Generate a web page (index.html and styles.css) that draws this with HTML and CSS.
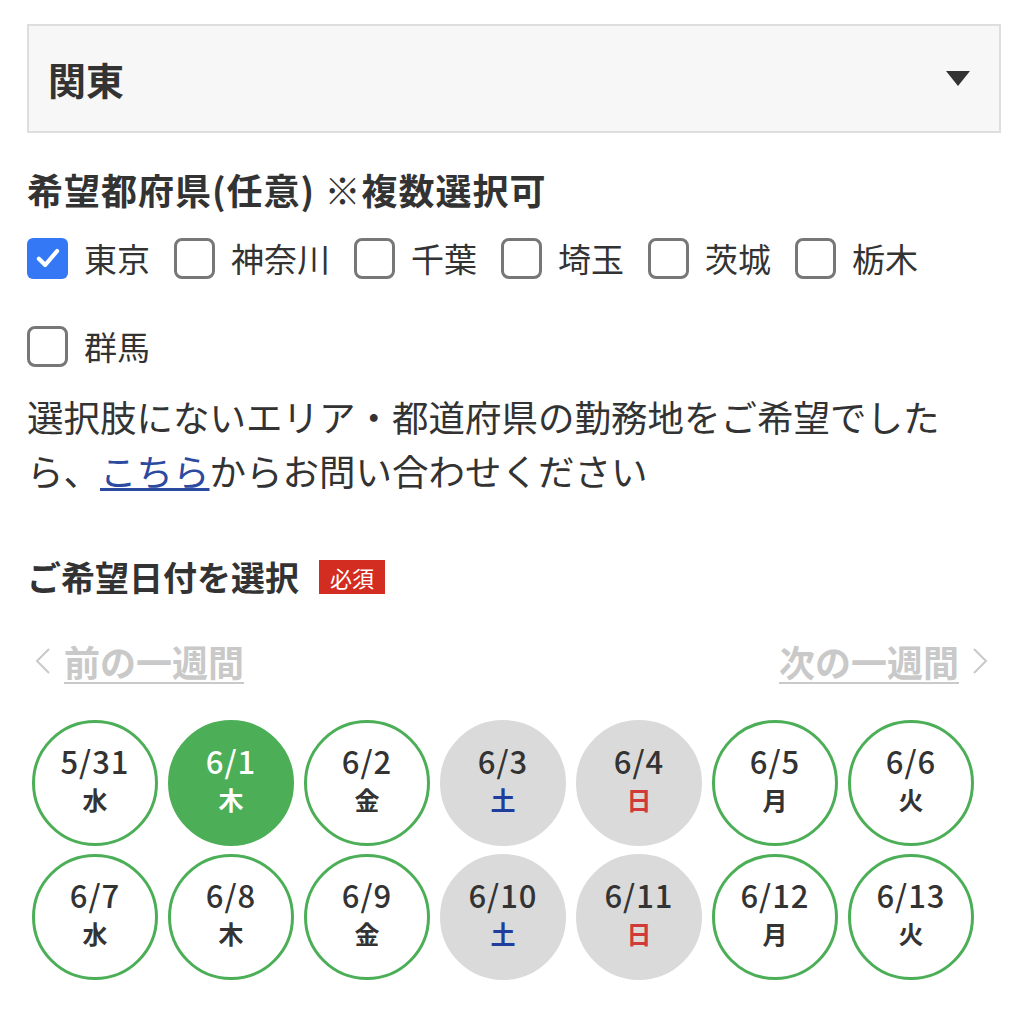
FILE: index.html
```html
<!DOCTYPE html>
<html lang="ja">
  <head>
    <meta charset="UTF-8" />
    <meta name="viewport" content="width=device-width, initial-scale=1.0" />
    <title>希望エリア・日付選択</title>
    <link rel="stylesheet" href="styles.css">
  </head>

  <body>
    <div class="select">
      <span>関東</span>
      <i class="caret"></i>
    </div>

    <h3 class="label pref-label">希望都府県(任意) ※複数選択可</h3>
    <ul class="prefs">
      <li>
        <span class="box checked">
          <svg viewBox="0 0 40 40" width="28" height="28">
            <polyline points="7,21 16,30 33,10" fill="none" stroke="#fff" stroke-width="6" stroke-linecap="round" stroke-linejoin="round" />
          </svg>
        </span>
        東京
      </li>
      <li><span class="box"></span>神奈川</li>
      <li><span class="box"></span>千葉</li>
      <li><span class="box"></span>埼玉</li>
      <li><span class="box"></span>茨城</li>
      <li><span class="box"></span>栃木</li>
      <li><span class="box"></span>群馬</li>
    </ul>
    <p class="note">
      選択肢にないエリア・都道府県の勤務地をご希望でしたら、<a href="#">こちら</a>からお問い合わせください
    </p>

    <h3 class="label date-label">ご希望日付を選択 <span class="req">必須</span></h3>

    <div class="week-nav">
      <a class="prev" href="#">
        <svg viewBox="0 0 16 28" width="16" height="28">
          <polyline points="14,2 2,14 14,26" fill="none" stroke="#c9c9c9" stroke-width="2" />
        </svg>
        <u>前の一週間</u>
      </a>
      <a class="next" href="#">
        <u>次の一週間</u>
        <svg viewBox="0 0 16 28" width="16" height="28">
          <polyline points="2,2 14,14 2,26" fill="none" stroke="#c9c9c9" stroke-width="2" />
        </svg>
      </a>
    </div>

    <ul class="days">
      <li><b>5/31</b><span>水</span></li>
      <li class="active"><b>6/1</b><span>木</span></li>
      <li><b>6/2</b><span>金</span></li>
      <li class="off"><b>6/3</b><span class="sat">土</span></li>
      <li class="off"><b>6/4</b><span class="sun">日</span></li>
      <li><b>6/5</b><span>月</span></li>
      <li><b>6/6</b><span>火</span></li>
      <li><b>6/7</b><span>水</span></li>
      <li><b>6/8</b><span>木</span></li>
      <li><b>6/9</b><span>金</span></li>
      <li class="off"><b>6/10</b><span class="sat">土</span></li>
      <li class="off"><b>6/11</b><span class="sun">日</span></li>
      <li><b>6/12</b><span>月</span></li>
      <li><b>6/13</b><span>火</span></li>
    </ul>
  </body>
</html>
```

FILE: styles.css
```css
body {
  margin: 0;
  padding: 24px 23px 0 27px;
  background: #fff;
  color: #333;
  font-family: "Noto Sans CJK JP", "Noto Sans", sans-serif;
}

ul {
  list-style: none;
  margin: 0;
  padding: 0;
}

.select {
  height: 105px;
  border: 2px solid #dedede;
  background: #f7f7f7;
  display: flex;
  align-items: center;
  justify-content: space-between;
  padding: 0 29px 0 19px;
  font-size: 38px;
  font-weight: 700;
}

.caret {
  width: 0;
  height: 0;
  border-left: 12px solid transparent;
  border-right: 12px solid transparent;
  border-top: 15px solid #333;
}

.label {
  margin: 32px 0 0;
  font-size: 35px;
  line-height: 48px;
  font-weight: 700;
  display: flex;
  align-items: center;
}

.pref-label {
  font-size: 36px;
  letter-spacing: 1px;
}

.prefs {
  display: flex;
  flex-wrap: wrap;
  column-gap: 24px;
  row-gap: 44px;
  margin-top: 23px;
}

.prefs li {
  display: flex;
  align-items: center;
  height: 44px;
  font-size: 33px;
}

.box {
  box-sizing: border-box;
  width: 41px;
  height: 41px;
  margin-right: 16px;
  border: 3px solid #777;
  border-radius: 8px;
  background: #fff;
  display: flex;
  align-items: center;
  justify-content: center;
}

.box.checked {
  border: none;
  border-radius: 6px;
  background: #3478f6;
}

.note {
  margin: 22px 0 0;
  max-width: 940px;
  font-size: 36.5px;
  line-height: 54px;
}

.note a {
  color: #2c4aa0;
}

.date-label {
  margin-top: 55px;
  font-size: 34px;
}

.req {
  margin-left: 20px;
  background: #d32c20;
  color: #fff;
  font-size: 22px;
  font-weight: 400;
  line-height: 34px;
  padding: 0 11px;
  letter-spacing: 0;
}

.week-nav {
  display: flex;
  justify-content: space-between;
  margin-top: 36px;
  padding: 0 13px 0 8px;
  font-size: 36px;
  line-height: 48px;
  font-weight: 700;
}

.week-nav a {
  display: flex;
  align-items: center;
  gap: 13px;
  color: #c9c9c9;
  text-decoration: none;
}

.week-nav u {
  text-decoration-thickness: 2px;
  text-underline-offset: 5px;
}

.days {
  display: grid;
  grid-template-columns: repeat(7, 126px);
  column-gap: 10px;
  row-gap: 8px;
  margin-top: 35px;
  padding-left: 5px;
}

.days li {
  box-sizing: border-box;
  width: 126px;
  height: 126px;
  border: 3px solid #4caf57;
  border-radius: 50%;
  display: flex;
  flex-direction: column;
  align-items: center;
  justify-content: center;
  padding-bottom: 6px;
}

.days b {
  font-size: 31px;
  font-weight: 500;
  line-height: 38px;
  letter-spacing: 1px;
}

.days span {
  font-size: 25px;
  font-weight: 700;
  line-height: 38px;
}

.days li.active {
  background: #4caf57;
  color: #fff;
}

.days li.off {
  border-color: #dadada;
  background: #dadada;
}

.sat {
  color: #1f3d9c;
}

.sun {
  color: #d23a3a;
}
```
